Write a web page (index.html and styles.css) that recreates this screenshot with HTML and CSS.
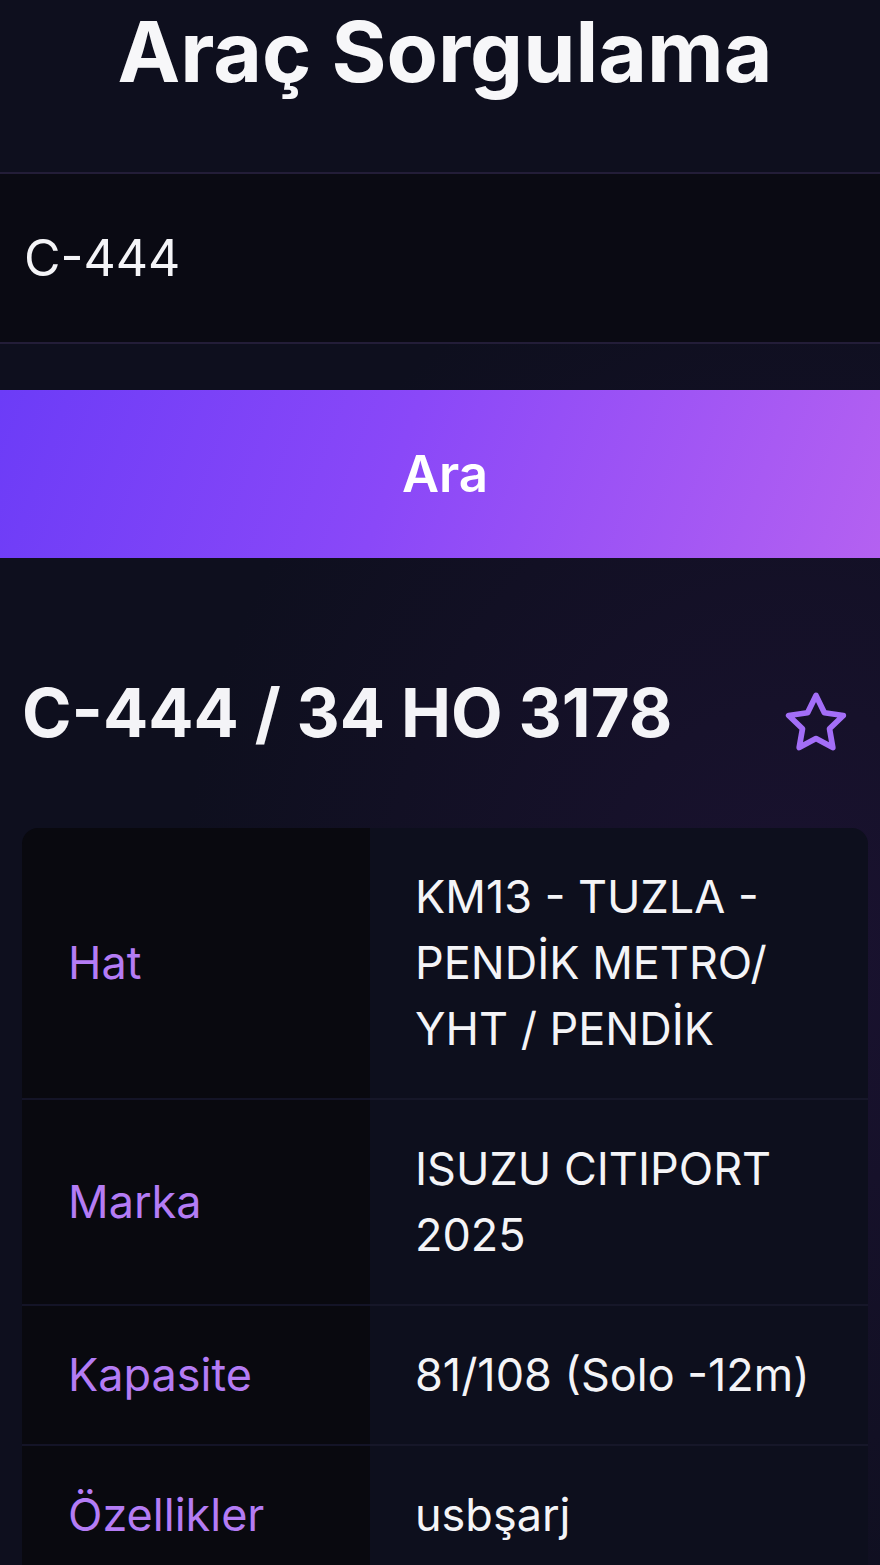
FILE: index.html
```html
<!DOCTYPE html>
<html lang="tr">
<head>
    <meta charset="UTF-8">
    <meta name="viewport" content="width=device-width, initial-scale=1.0">
    <title>Araç Sorgulama</title>
    <link rel="stylesheet" href="styles.css">
</head>
<body>
    <h1 class="title">Araç Sorgulama</h1>

    <!-- Search form -->
    <form class="search">
        <input type="text" class="search-input" value="C-444">
        <button type="submit" class="search-btn">Ara</button>
    </form>

    <div class="result">
        <div class="result-head">
            <h2>C-444 / 34 HO 3178</h2>
            <button class="fav-btn" aria-label="Favori">
                <svg viewBox="0 0 24 24" width="72" height="72" fill="none" stroke="currentColor" stroke-width="1.9" stroke-linejoin="round">
                    <path d="M12 2.8l2.8 5.8 6.3.9-4.6 4.4 1.1 6.3L12 17.2l-5.6 3 1.1-6.3-4.6-4.4 6.3-.9z"/>
                </svg>
            </button>
        </div>

        <table class="info">
            <tr>
                <th>Hat</th>
                <td>KM13 - TUZLA - PENDİK METRO/ YHT / PENDİK</td>
            </tr>
            <tr>
                <th>Marka</th>
                <td>ISUZU CITIPORT 2025</td>
            </tr>
            <tr>
                <th>Kapasite</th>
                <td>81/108 (Solo -12m)</td>
            </tr>
            <tr>
                <th>Özellikler</th>
                <td>usbşarj</td>
            </tr>
        </table>
    </div>
</body>
</html>
```

FILE: styles.css
```css
body {
    font-family: Inter, "Noto Sans", sans-serif;
    margin: 0;
    color: #f4f4f7;
    background: radial-gradient(ellipse at 90% 60%, #1a1230 0%, rgba(26, 18, 48, 0) 55%), #0e0f1e;
    min-height: 100vh;
    overflow: hidden;
}
.title {
    margin: 2px 0 0;
    padding-left: 10px;
    text-align: center;
    font-size: 84px;
    font-weight: 700;
    line-height: 1.2;
    color: #f7f7f9;
}
.search {
    margin-top: 69px;
}
.search-input {
    display: block;
    width: 100%;
    height: 172px;
    box-sizing: border-box;
    padding: 0 24px;
    background: #0a0a13;
    border: none;
    border-top: 2px solid #231d38;
    border-bottom: 2px solid #231d38;
    color: #f4f4f7;
    font-family: Inter, sans-serif;
    font-size: 50px;
    outline: none;
}
.search-btn {
    display: block;
    width: 100%;
    height: 168px;
    margin-top: 46px;
    padding: 0 0 0 10px;
    border: none;
    background: linear-gradient(110deg, #6c3cf7 0%, #8a48f8 45%, #b461f1 100%);
    color: #fff;
    font-family: Inter, sans-serif;
    font-size: 51px;
    font-weight: 600;
    cursor: pointer;
}
.result {
    padding: 0 12px 0 22px;
}
.result-head {
    display: flex;
    align-items: center;
    justify-content: space-between;
    margin-top: 105px;
    height: 100px;
}
.result-head h2 {
    margin: 0;
    font-size: 67px;
    font-weight: 700;
    color: #f4f4f7;
}
.fav-btn {
    background: none;
    border: none;
    padding: 0;
    margin: 20px 16px 0 0;
    color: #a36ef7;
    display: flex;
}
.info {
    width: 100%;
    margin-top: 65px;
    border-collapse: collapse;
    border-radius: 16px 16px 0 0;
    overflow: hidden;
    font-size: 45px;
    line-height: 66px;
}
.info th {
    width: 348px;
    box-sizing: border-box;
    padding: 36px 20px 36px 46px;
    text-align: left;
    font-weight: 400;
    color: #b47cf5;
    background: #09090f;
    border-bottom: 2px solid #141427;
}
.info td {
    padding: 36px 20px 36px 45px;
    color: #f4f4f7;
    background: #0d0f1d;
    border-bottom: 2px solid #161729;
}
```
